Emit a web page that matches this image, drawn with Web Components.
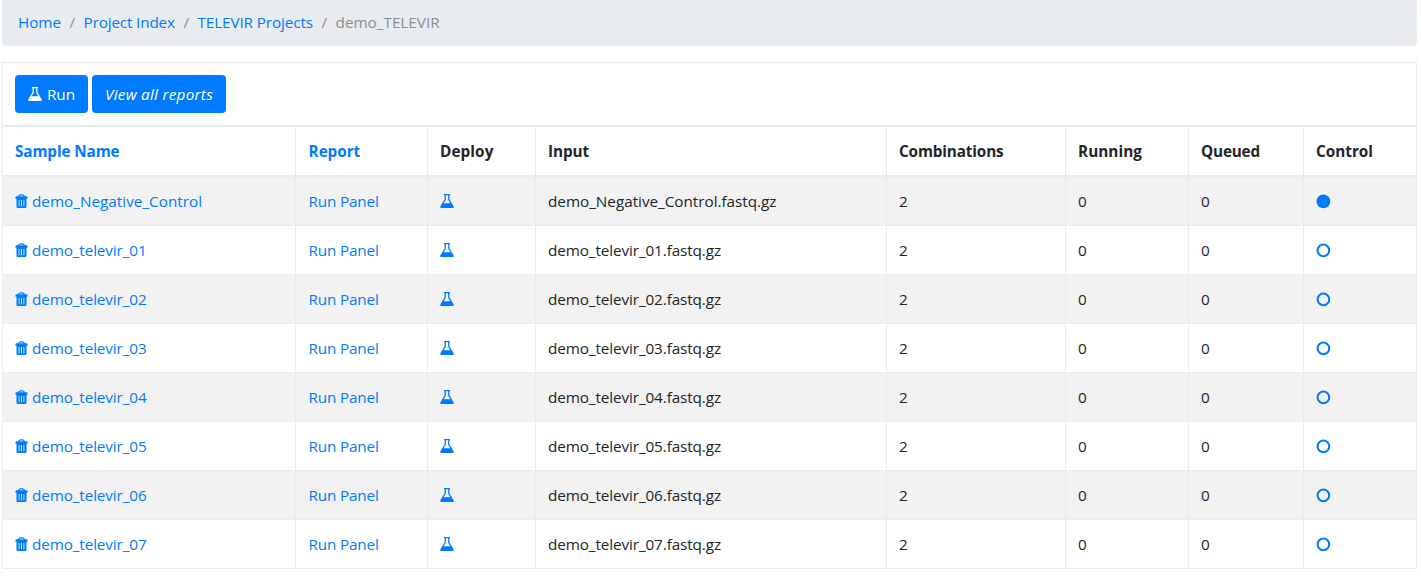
<!DOCTYPE html>
<html lang="en">
<head>
<meta charset="utf-8">
<title>demo_TELEVIR</title>
<style>
html,body{margin:0;background:#fff}
body{height:577px;overflow:hidden;font:400 15.3px/24px "Open Sans","Noto Sans",sans-serif;color:#212529}
</style>
</head>
<body>
<televir-page></televir-page>
<script>
const define = (name, html, setup) => customElements.define(name, class extends HTMLElement {
  connectedCallback() {
    if (this.shadowRoot) return;
    const root = this.attachShadow({mode: 'open'});
    const t = document.createElement('template');
    t.innerHTML = typeof html === 'function' ? html(this) : html;
    root.append(t.content.cloneNode(true));
    if (setup) setup(this, root);
  }
});

// Text run tracked to a given advance width.
define('fit-text', '<style>:host{display:inline-block;white-space:pre}</style><slot></slot>', el => {
  const w = +el.getAttribute('w');
  const natural = el.getBoundingClientRect().width;
  if (natural) el.style.letterSpacing = ((w - natural) / el.textContent.length).toFixed(4) + 'px';
});

const shapes = {
  trash: '<path d="M3.500 2.900Q3.700.8 5.500.8h2Q9.300.8 9.500 2.900" fill="none" stroke="currentColor" stroke-width="1.200"/><path fill="currentColor" fill-rule="evenodd" d="M1.200 2.300h10.600q.7 0 .7.700V4.800H.5V3q0-.7.7-.7zM1.500 4.800h10v7.900q0 1.300-1.300 1.300H2.800Q1.500 14 1.500 12.700zM3.700 6v6.300h.8V6zM6.100 6v6.300h.8V6zM8.500 6v6.300h.8V6z"/>',
  flask: '<path fill="currentColor" fill-rule="evenodd" d="M4 .1h6v1.200H9.400v3.900L13.600 12.200Q14.500 14 12.800 14H1.200Q-.5 14 .4 12.200L4.600 5.200V1.300H4zM5.900 1.200v4.300L3.700 9.200h6.600L8.100 5.500V1.200z"/>',
  filled: '<circle cx="7.400" cy="7.400" r="6.900" fill="currentColor"/>',
  ring: '<circle cx="7.400" cy="7.400" r="5.800" fill="none" stroke="currentColor" stroke-width="2"/>'
};
define('ui-icon', el => `<style>:host{display:block;width:14px;height:14px;flex:none}svg{display:block;overflow:visible}</style><svg width="14" height="14" viewBox="0 0 14 14">${shapes[el.getAttribute('name')]}</svg>`);

define('bread-crumb', `<style>
:host{display:flex;align-items:center;height:48px;box-sizing:border-box;margin-top:-2px;padding:0 16px;background:#e9ecef;border-radius:4px;color:#868e96}
a{color:#007bff}i{font-style:normal;width:22.600px;text-align:center}
</style><a><fit-text w="43">Home</fit-text></a><i>/</i><a><fit-text w="91.300">Project Index</fit-text></a><i>/</i><a><fit-text w="115.500">TELEVIR Projects</fit-text></a><i>/</i><fit-text w="104">demo_TELEVIR</fit-text>`);

define('ui-button', `<style>:host{display:flex;align-items:center;justify-content:center;gap:5px;box-sizing:border-box;height:38px;border-radius:4px;background:#007bff;color:#fff}</style><slot></slot>`);

define('table-cell', `<style>:host{display:flex;align-items:center;gap:3px;box-sizing:border-box;padding-left:12px;border-left:1px solid #e9ecef;min-width:0}
:host([link]){color:#007bff}:host([report]){padding-left:12.600px}</style><slot></slot>`);

define('table-row', `<style>
:host{display:grid;grid-template-columns:293px 132px 108px 351px 179px 123px 115px 114px;height:49px;box-sizing:border-box;border-bottom:1px solid #e9ecef;border-right:1px solid #e9ecef}
:host([striped]){background:#f2f2f2}
:host([head]){height:52px;border-top:2px solid #e9ecef;border-bottom-width:2px;font-weight:700}
</style><slot></slot>`);

const heads = [['Sample Name',104.5,'link'],['Report',51.5,'link report'],['Deploy',53.5,''],['Input',41,''],['Combinations',104.5,''],['Running',64,''],['Queued',59,''],['Control',57,'']];
const names = ['demo_Negative_Control', ...[1,2,3,4,5,6,7].map(n => 'demo_televir_0' + n)];

define('sample-table', () => `<style>:host{display:block}</style>
<table-row head>${heads.map(([t, w, l]) => `<table-cell ${l}><fit-text w="${w}">${t}</fit-text></table-cell>`).join('')}</table-row>
${names.map((n, i) => `<table-row ${i % 2 ? '' : 'striped'}>
<table-cell link><ui-icon name="trash"></ui-icon><fit-text w="${i ? 114.5 : 170}">${n}</fit-text></table-cell>
<table-cell link report><fit-text w="70">Run Panel</fit-text></table-cell>
<table-cell link><ui-icon name="flask"></ui-icon></table-cell>
<table-cell><fit-text w="${i ? 173 : 228.5}">${n}.fastq.gz</fit-text></table-cell>
<table-cell>2</table-cell><table-cell>0</table-cell><table-cell>0</table-cell>
<table-cell link><ui-icon name="${i ? 'ring' : 'filled'}"></ui-icon></table-cell></table-row>`).join('')}`);

define('televir-page', `<style>
:host{display:flow-root;width:1415px;margin-left:2px}
.tools{display:flex;gap:4px;height:63px;box-sizing:border-box;margin-top:16px;padding:12px;border:1px solid #e9ecef;border-bottom:0}
.run{width:73px}.all{width:134px;font-style:italic}
</style><bread-crumb></bread-crumb>
<div class="tools"><ui-button class="run"><ui-icon name="flask"></ui-icon><fit-text w="28">Run</fit-text></ui-button><ui-button class="all"><fit-text w="108">View all reports</fit-text></ui-button></div>
<sample-table></sample-table>`);
</script>
</body>
</html>
